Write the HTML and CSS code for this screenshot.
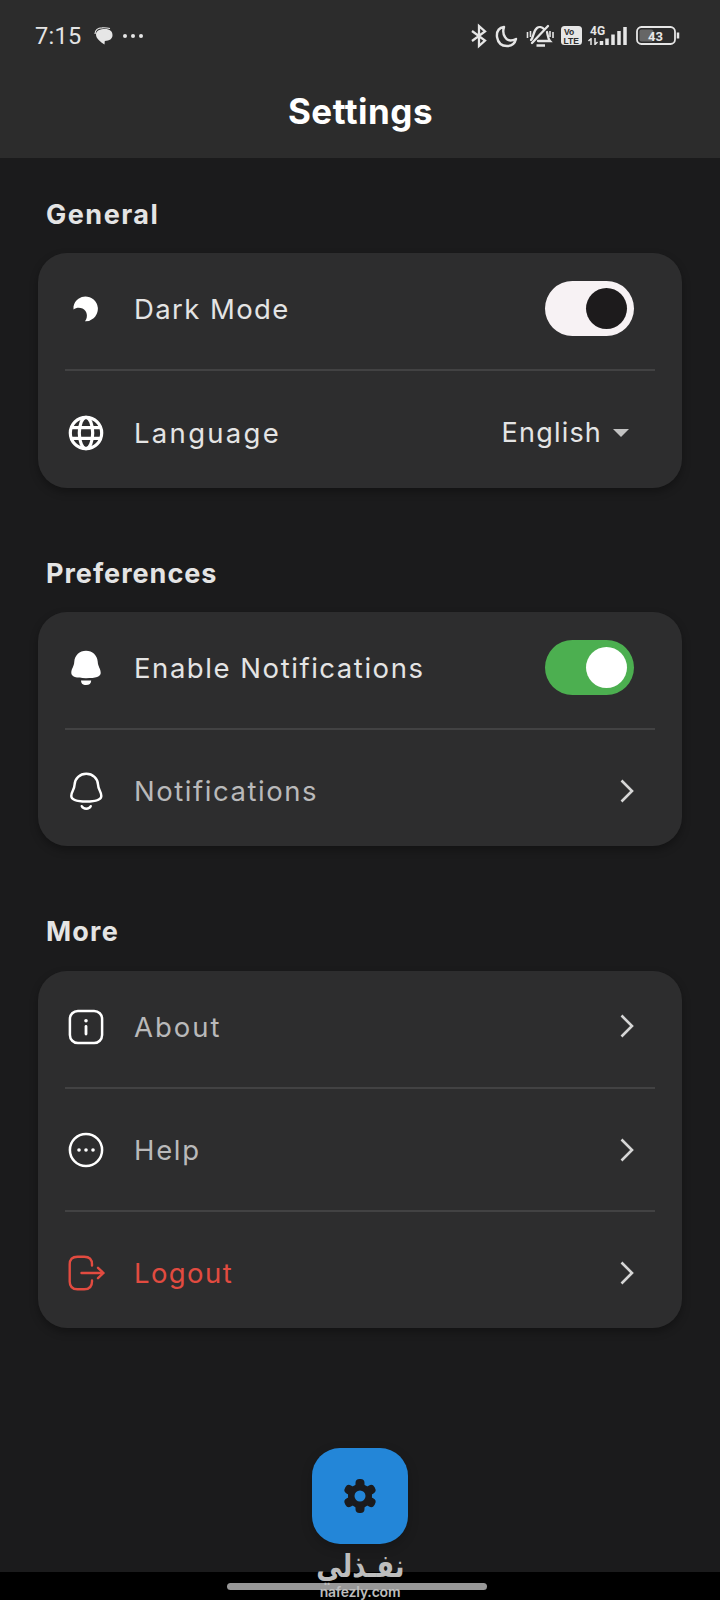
FILE: index.html
```html
<!DOCTYPE html>
<html lang="en">
<head>
  <meta charset="UTF-8" />
  <meta name="viewport" content="width=device-width, initial-scale=1.0" />
  <title>Settings</title>
  <link rel="stylesheet" href="styles.css">
</head>
<body>
  <header class="header">
    <div class="status-bar">
      <div class="status-left">
        <span class="clock">7:15</span>
        <svg class="chat-icon" width="20" height="18" viewBox="0 0 20 18">
          <path d="M1 7C1 3 4 .8 8 .8C12 .5 14 1 16 1.500" fill="none" stroke="#e6e6e6" stroke-width="1.200"/>
          <path d="M2 7.500C2 3.500 6 2 11 2C16 2 18.500 4.500 18.500 8C18.500 12 15.500 13.800 10.800 14L10.500 17.500C6.500 15 2 11.500 2 7.500Z" fill="#e6e6e6"/>
        </svg>
        <svg width="22" height="6" viewBox="0 0 22 6" fill="#e6e6e6">
          <circle cx="3" cy="3" r="2"/><circle cx="11" cy="3" r="2"/><circle cx="19" cy="3" r="2"/>
        </svg>
      </div>
      <svg class="status-right" width="210" height="26" viewBox="0 0 210 26" fill="none" stroke="#e6e6e6">
        <!-- bluetooth -->
        <path d="M2 8L15 17.500L9 23V3L15 8.500L2 18" stroke-width="2.300"/>
        <!-- do not disturb -->
        <path d="M34 4C28 5 26.500 9 27 14C28 20 31 23 37 23C42 23 45 20 46 16C41 18.500 37 17.500 35 14C33 11 33 7 34 4Z" stroke-width="2.400" stroke-linejoin="round"/>
        <!-- silent -->
        <path d="M62 20L78 3M61 17C64 14 63 8 67 5C69 3.500 72 4 74 6M77 9C78 13 78 16 80 18H68" stroke-width="2.300" stroke-linecap="round"/>
        <path d="M57.500 9V15M60.500 8V14M80 8V14M83 9V15" stroke-width="1.600"/>
        <path d="M66.500 22.500H75" stroke-width="2.500"/>
        <!-- volte -->
        <rect x="91" y="3" width="21" height="19" rx="3.500" fill="#e6e6e6" stroke="none"/>
        <text class="volte" x="94" y="12">Vo</text>
        <text class="volte" x="93.500" y="20.500">LTE</text>
        <!-- signal -->
        <text class="network" x="120" y="12">4G</text>
        <path d="M121 22V15M118.500 18L121 15.500M125 15V22M127.500 19L125 21.500" stroke-width="1.500"/>
        <path d="M131.500 18V22M137 15.500V22M143 11.500V22M149 8V22M155 4V22" stroke-width="3.500"/>
        <!-- battery -->
        <rect x="167" y="4" width="38" height="17" rx="4.500" stroke-width="1.800"/>
        <rect x="169.500" y="6.500" width="14" height="12" rx="2" fill="#666" stroke="none"/>
        <path d="M208 9.500V15.500" stroke-width="2.500"/>
        <text class="battery" x="178" y="17.500">43</text>
      </svg>
    </div>
    <h1>Settings</h1>
  </header>

  <main class="container">
    <section class="section">
      <h2 class="t-general">General</h2>
      <div class="card">
        <div class="row">
          <svg class="icon" viewBox="0 0 36 36">
            <path d="M5.500 15.500A12.300 12.300 0 1 1 17 30.200C20.500 26 19 19.500 14.500 17.500C11.500 16 8 16.500 5.500 18.500Z" fill="#fff"/>
          </svg>
          <span class="label t-dark">Dark Mode</span>
          <span class="switch switch-light"></span>
        </div>
        <hr>
        <div class="row">
          <svg class="icon" viewBox="0 0 36 36" fill="none" stroke="#fff" stroke-width="3.200">
            <circle cx="18" cy="18" r="15.700"/>
            <ellipse cx="18" cy="18" rx="6.700" ry="15.700"/>
            <path d="M3 12.700H33M3 23.300H33"/>
          </svg>
          <span class="label t-language">Language</span>
          <span class="select"><span class="t-english">English</span><i class="caret"></i></span>
        </div>
      </div>
    </section>

    <section class="section">
      <h2 class="t-preferences">Preferences</h2>
      <div class="card">
        <div class="row">
          <svg class="icon" viewBox="0 0 36 36" fill="#fff">
            <path d="M18 .800C11.500 .800 6.800 5.500 6.300 11.500C6 17 3.300 18.500 3.300 23C3.300 26.500 8 28.200 18 28.200S32.700 26.500 32.700 23C32.700 18.500 30 17 29.700 11.500C29.200 5.500 24.500 .800 18 .800Z"/>
            <path d="M13 30.500H23.200C23 33.500 21.500 35 18 35S13.200 33.500 13 30.500Z"/>
          </svg>
          <span class="label t-enable">Enable Notifications</span>
          <span class="switch switch-green"></span>
        </div>
        <hr>
        <div class="row">
          <svg class="icon" viewBox="0 0 36 36" fill="none" stroke="#fff" stroke-width="2.500" stroke-linecap="round">
            <path d="M18.300 .800C11.800 .800 7 5.500 6.600 11.500C6.300 17.500 3.300 18 3.300 23C3.300 26.800 8 28.500 18.300 28.500S33.300 26.800 33.300 23C33.300 18 30.300 17.500 30 11.500C29.600 5.500 24.800 .800 18.300 .800Z"/>
            <path d="M13.800 33.200C15.500 36.500 21 36.500 22.700 33.200"/>
          </svg>
          <span class="label muted t-notifications">Notifications</span>
          <svg class="chevron" viewBox="0 0 14 24"><path d="M1.500 1.500L12 12L1.500 22.500"/></svg>
        </div>
      </div>
    </section>

    <section class="section">
      <h2 class="t-more">More</h2>
      <div class="card">
        <div class="row">
          <svg class="icon" viewBox="0 0 36 36" fill="none" stroke="#fff" stroke-width="2.500" stroke-linecap="round">
            <rect x="1.900" y="1.900" width="32.200" height="32.200" rx="8"/>
            <path d="M18 17.500V25" stroke-width="2.800"/>
            <circle cx="18" cy="11.800" r="1.800" fill="#fff" stroke="none"/>
          </svg>
          <span class="label muted t-about">About</span>
          <svg class="chevron" viewBox="0 0 14 24"><path d="M1.500 1.500L12 12L1.500 22.500"/></svg>
        </div>
        <hr>
        <div class="row">
          <svg class="icon" viewBox="0 0 36 36" fill="#fff">
            <circle cx="18" cy="18" r="16.100" fill="none" stroke="#fff" stroke-width="2.500"/>
            <circle cx="11" cy="18" r="1.800"/><circle cx="18" cy="18" r="1.800"/><circle cx="25" cy="18" r="1.800"/>
          </svg>
          <span class="label muted t-help">Help</span>
          <svg class="chevron" viewBox="0 0 14 24"><path d="M1.500 1.500L12 12L1.500 22.500"/></svg>
        </div>
        <hr>
        <div class="row">
          <svg class="icon" viewBox="0 0 36 36" fill="none" stroke="#e24b40" stroke-width="2.400" stroke-linecap="round" stroke-linejoin="round">
            <path d="M24 10.500V9.500Q24 1.700 16.200 1.700H9.500Q1.700 1.700 1.700 9.500V26.500Q1.700 34.300 9.500 34.300H16.200Q24 34.300 24 26.500V25.500"/>
            <path d="M13.500 18H35.500M30 12.800L35.500 18L30 23.200"/>
          </svg>
          <span class="label danger t-logout">Logout</span>
          <svg class="chevron" viewBox="0 0 14 24"><path d="M1.500 1.500L12 12L1.500 22.500"/></svg>
        </div>
      </div>
    </section>
  </main>

  <button class="fab" aria-label="Settings">
    <svg width="34" height="36" viewBox="0 0 34 36">
      <g fill="#1b1b1d">
        <circle cx="17" cy="18" r="12"/>
        <rect x="12.500" y="1" width="9" height="34" rx="4"/>
        <rect x="12.500" y="1" width="9" height="34" rx="4" transform="rotate(60 17 18)"/>
        <rect x="12.500" y="1" width="9" height="34" rx="4" transform="rotate(120 17 18)"/>
      </g>
      <circle cx="17" cy="18" r="5.500" fill="#2386d8"/>
    </svg>
  </button>

  <footer class="nav-bar">
    <div class="home-bar"></div>
    <div class="watermark">
      <span class="wm-ar" lang="ar" dir="rtl">نفـذلي</span>
      <span class="wm-en">nafezly.com</span>
    </div>
  </footer>
</body>
</html>
```
FILE: styles.css
```css
* {
  box-sizing: border-box;
}

body {
  margin: 0;
  height: 1600px;
  overflow: hidden;
  display: flex;
  flex-direction: column;
  background: #1b1b1c;
  color: #e4e4e4;
  font-family: Inter, "Open Sans", sans-serif;
}

.header {
  height: 158px;
  background: #2c2c2c;
}

.status-bar {
  height: 72px;
  padding: 0 40px 0 35px;
  display: flex;
  align-items: center;
  justify-content: space-between;
}

.status-left {
  display: flex;
  align-items: center;
}

.clock {
  font: 450 23.500px Roboto, sans-serif;
  letter-spacing: 0.3px;
}

.chat-icon {
  margin: 0 8px 0 12px;
}

.volte {
  font: bold 8.500px "Liberation Sans", sans-serif;
  fill: #2c2c2c;
  stroke: none;
}

.network {
  font: bold 12px Roboto, sans-serif;
  fill: #e6e6e6;
  stroke: none;
}

.battery {
  font: bold 13px Roboto, sans-serif;
  fill: #e6e6e6;
  stroke: none;
}

h1 {
  margin: 17px 0 0;
  padding-left: 1px;
  color: #fff;
  font-size: 35px;
  line-height: 44px;
  font-weight: 700;
  letter-spacing: 0.5px;
  text-align: center;
}

.container {
  padding: 36px 38px 0;
}

.section {
  margin-bottom: 65px;
}

h2 {
  margin: 0 0 17.300px 8px;
  height: 42px;
  line-height: 42px;
  font-size: 27px;
  font-weight: 700;
}

.card {
  padding: 0 27px;
  background: #2d2d2e;
  border-radius: 29px;
  box-shadow: 0 4px 8px rgba(0, 0, 0, 0.3);
}

.row {
  height: 111px;
  padding-right: 21px;
  display: flex;
  align-items: center;
}

hr {
  height: 2px;
  margin: 5.200px 0;
  border: none;
  background: #424243;
}

.icon {
  width: 36px;
  height: 36px;
  margin: 1px 30px 0 3px;
  overflow: visible;
}

.label {
  flex: 1;
  padding-top: 1px;
  font-size: 27.500px;
  white-space: nowrap;
}

/* tracking per text */
.t-general { letter-spacing: 1.5px; }
.t-preferences { letter-spacing: 1px; }
.t-more { letter-spacing: 1.2px; }
.t-dark { letter-spacing: 1.4px; }
.t-language { letter-spacing: 2.3px; }
.t-english { letter-spacing: 1.2px; }
.t-enable { letter-spacing: 1.55px; }
.t-notifications { letter-spacing: 1.55px; }
.t-about { letter-spacing: 2px; }
.t-help { letter-spacing: 1.7px; }
.t-logout { letter-spacing: 1.4px; }

.muted {
  color: #b9b9ba;
}

.danger {
  color: #e24b40;
}

.switch {
  width: 89px;
  height: 55px;
  padding: 7px;
  border-radius: 28px;
}

.switch::after {
  content: "";
  display: block;
  width: 41px;
  height: 41px;
  margin-left: auto;
  border-radius: 50%;
}

.switch-light {
  background: #f7f2f4;
}

.switch-light::after {
  background: #1d1b1c;
}

.switch-green {
  background: #4caf50;
}

.switch-green::after {
  background: #fff;
}

.select {
  display: flex;
  align-items: center;
  font-size: 27px;
}

.caret {
  margin: 1px 5px 0 11px;
  border: 8px solid transparent;
  border-top-color: #c2c2c2;
  border-bottom: none;
}

.chevron {
  width: 14px;
  height: 24px;
  fill: none;
  stroke: #d6d6d6;
  stroke-width: 2.600;
}

.fab {
  width: 96px;
  height: 96px;
  margin: 55px auto 0;
  padding: 0;
  display: flex;
  align-items: center;
  justify-content: center;
  border: none;
  border-radius: 28px;
  background: #2386d8;
  box-shadow: 0 4px 12px rgba(0, 0, 0, 0.2);
}

.nav-bar {
  position: relative;
  height: 28px;
  margin-top: auto;
  padding-top: 11px;
  background: #000;
}

.home-bar {
  width: 260px;
  height: 7px;
  margin-left: 227px;
  border-radius: 4px;
  background: #979797;
}

/* logo sits over the navigation bar */
.watermark {
  position: absolute;
  top: -23px;
  left: 0;
  width: 100%;
  display: flex;
  flex-direction: column;
  align-items: center;
  color: #bdbdbd;
}

.wm-ar {
  font: bold 32px/35px "DejaVu Sans", sans-serif;
  transform: scaleX(0.81);
}

.wm-en {
  font: 600 14px/16px Inter, sans-serif;
  letter-spacing: -0.2px;
}
```
